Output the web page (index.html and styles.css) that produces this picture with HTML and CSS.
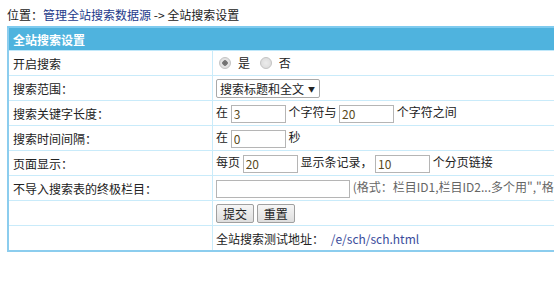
FILE: index.html
```html
<!DOCTYPE html>
<html lang="zh-CN">
<head>
    <meta charset="UTF-8">
    <title>全站搜索设置</title>
    <link rel="stylesheet" href="styles.css">
</head>
<body>
    <div class="nav">位置：<a href="#">管理全站搜索数据源</a> -&gt; 全站搜索设置</div>

    <form class="setform">
        <table class="tableborder">
            <tr class="header">
                <td colspan="2">全站搜索设置</td>
            </tr>
            <tr>
                <td class="label">开启搜索</td>
                <td>
                    <label class="radio"><input type="radio" name="open" checked> 是</label>
                    <label class="radio"><input type="radio" name="open"> 否</label>
                </td>
            </tr>
            <tr>
                <td class="label">搜索范围：</td>
                <td>
                    <span class="select">搜索标题和全文<span class="arrow">&#9660;</span></span>
                </td>
            </tr>
            <tr>
                <td class="label">搜索关键字长度：</td>
                <td>在 <input type="text" class="small" value="3"> 个字符与 <input type="text" class="small" value="20"> 个字符之间</td>
            </tr>
            <tr>
                <td class="label">搜索时间间隔：</td>
                <td>在 <input type="text" class="small" value="0"> 秒</td>
            </tr>
            <tr>
                <td class="label">页面显示：</td>
                <td>每页 <input type="text" class="small" value="20"> 显示条记录， <input type="text" class="small" value="10"> 个分页链接</td>
            </tr>
            <tr>
                <td class="label">不导入搜索表的终极栏目：</td>
                <td><input type="text" class="wide" value=""> <span class="tip">(格式：栏目ID1,栏目ID2...多个用","格开)</span></td>
            </tr>
            <tr>
                <td class="label">&nbsp;</td>
                <td><button type="submit">提交</button> <button type="reset">重置</button></td>
            </tr>
            <tr>
                <td class="label">&nbsp;</td>
                <td>全站搜索测试地址： <a href="#" class="url">/e/sch/sch.html</a></td>
            </tr>
        </table>
    </form>
</body>
</html>
```

FILE: styles.css
```css
html, body {
    overflow: hidden;
}

body {
    margin: 0;
    padding: 5px 0 0 7px;
    font-family: "Noto Sans CJK SC", "DejaVu Sans", sans-serif;
    font-size: 12px;
    color: #222;
    background-color: #fff;
}

a {
    color: #1d3a8a;
    text-decoration: none;
}

.nav {
    height: 21px;
    line-height: 20px;
}

.setform {
    margin: 0;
}

.tableborder {
    width: 640px;
    border-collapse: collapse;
    border-left: 2px solid #8ccdee;
    border-bottom: 2px solid #8ccdee;
}

.tableborder td {
    height: 24px;
    padding: 0 0 0 3px;
    border-bottom: 1px solid #c9ebfa;
    white-space: nowrap;
    vertical-align: middle;
}

.tableborder td.label {
    width: 199px;
    padding-left: 4px;
    border-right: 1px solid #c9ebfa;
}

.header td {
    height: 22px;
    border-top: 2px solid #7fcbef;
    border-bottom: 1px solid #c0e8fa;
    background-color: #4fb3de;
    color: #fff;
    font-weight: bold;
    padding-left: 4px;
}

.radio {
    display: inline-flex;
    align-items: center;
    margin-right: 4px;
}

.radio input {
    appearance: none;
    -webkit-appearance: none;
    margin: 0 7px 0 3px;
    width: 12px;
    height: 12px;
    border: 1px solid #c4c4c4;
    border-radius: 50%;
    background: radial-gradient(circle, #ececec 0, #d8d8d8 100%);
    box-sizing: border-box;
}

.radio input:checked {
    background: radial-gradient(circle, #6e6e6e 0, #7a7a7a 2.5px, #e6e6e6 3px, #d6d6d6 100%);
}

.select {
    display: inline-block;
    height: 17px;
    line-height: 17px;
    padding: 0 4px 0 3px;
    border: 1px solid #a9a9a9;
    border-radius: 2px;
    background-color: #fff;
}

.arrow {
    font-size: 7px;
    margin-left: 4px;
    vertical-align: 2px;
}

input[type="text"] {
    height: 18px;
    padding: 0 2px;
    border: 1px solid #b5b5b5;
    box-sizing: border-box;
    font-family: inherit;
    font-size: 12px;
    color: #5a4a20;
    vertical-align: middle;
}

input.small {
    width: 55px;
}

input.wide {
    width: 134px;
}

.tip {
    color: #666;
}

button {
    height: 19px;
    padding: 0 6px;
    border: 1px solid #a0a0a0;
    border-radius: 2px;
    background: linear-gradient(#f6f6f6, #dedede);
    font-family: inherit;
    font-size: 12px;
    color: #222;
    vertical-align: middle;
}

.url {
    color: #3a4c9c;
    margin-left: 4px;
}
```
